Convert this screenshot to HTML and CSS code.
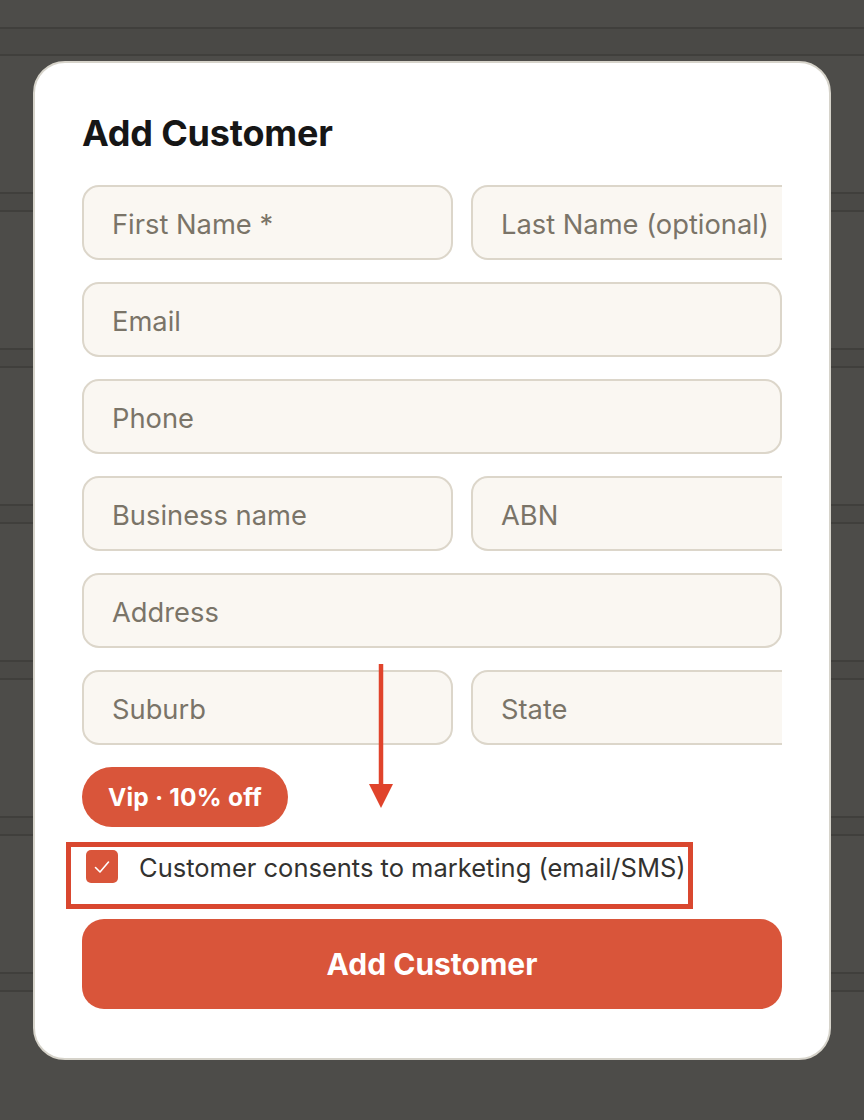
FILE: index.html
```html
<!DOCTYPE html>
<html lang="en">
<head>
<meta charset="utf-8">
<title>Add Customer</title>
<link rel="stylesheet" href="styles.css">
</head>
<body>
<div class="backdrop">
  <div class="bg-row bg-row-first"></div>
  <div class="bg-row"></div>
  <div class="bg-row"></div>
  <div class="bg-row"></div>
  <div class="bg-row"></div>
  <div class="bg-row"></div>
  <div class="bg-row"></div>
</div>

<div class="modal">
  <h1 class="title">Add Customer</h1>
  <form class="form">
    <div class="row split">
      <input class="field half" type="text" placeholder="First Name *">
      <input class="field half" type="text" placeholder="Last Name (optional)">
    </div>
    <div class="row">
      <input class="field" type="email" placeholder="Email">
    </div>
    <div class="row">
      <input class="field" type="tel" placeholder="Phone">
    </div>
    <div class="row split">
      <input class="field half" type="text" placeholder="Business name">
      <input class="field half" type="text" placeholder="ABN">
    </div>
    <div class="row">
      <input class="field" type="text" placeholder="Address">
    </div>
    <div class="row split">
      <input class="field half" type="text" placeholder="Suburb">
      <input class="field half" type="text" placeholder="State">
    </div>
    <div class="pill-wrap">
      <span class="pill">Vip · 10% off</span>
    </div>
    <label class="consent">
      <span class="check">
        <svg viewBox="0 0 32 32" width="32" height="32" aria-hidden="true">
          <path d="M9.5 16.5 L14 21 L22.5 11" fill="none" stroke="#fff" stroke-width="1.6" stroke-linecap="round" stroke-linejoin="round"/>
        </svg>
      </span>
      <span class="consent-text">Customer consents to marketing (email/SMS)</span>
    </label>
    <button class="submit" type="button">Add Customer</button>
  </form>
</div>

<svg class="arrow" width="30" height="150" viewBox="0 0 30 150" aria-hidden="true">
  <line x1="15" y1="1" x2="15" y2="124" stroke="#e0432b" stroke-width="4.5"/>
  <polygon points="3,121 27,121 15,145" fill="#e0432b"/>
</svg>
</body>
</html>
```

FILE: styles.css
```css
* {
  box-sizing: border-box;
}

html, body {
  margin: 0;
  padding: 0;
}

body {
  width: 864px;
  height: 1120px;
  background: #4d4c49;
  font-family: "Inter", "Liberation Sans", sans-serif;
  position: relative;
  overflow: hidden;
}

.backdrop {
  padding-top: 27px;
  display: flex;
  flex-direction: column;
  gap: 136px;
}

.bg-row {
  height: 20px;
  border-top: 2px solid #403f3c;
  border-bottom: 2px solid #403f3c;
  background: #4a4946;
}

.bg-row-first {
  height: 29px;
}

.modal {
  position: absolute;
  left: 33px;
  top: 61px;
  width: 798px;
  background: #ffffff;
  border: 2px solid #d6d3ca;
  border-radius: 32px;
  padding: 50px 47px 49px 47px;
}

.title {
  margin: 0 0 32px 0;
  font-size: 36px;
  line-height: 40px;
  font-weight: 700;
  color: #161616;
  letter-spacing: -0.2px;
}

.form {
  display: flex;
  flex-direction: column;
  width: 700px;
}

.row {
  display: flex;
  gap: 18px;
  margin-bottom: 22px;
  overflow: hidden;
}

.field {
  display: block;
  width: 100%;
  height: 75px;
  border: 2px solid #dcd6ca;
  border-radius: 17px;
  background: #faf7f2;
  padding: 3px 20px 0 28px;
  font-family: "Inter", "Liberation Sans", sans-serif;
  font-size: 27.3px;
  color: #333;
  outline: none;
}

.field::placeholder {
  color: #7a7468;
  opacity: 1;
}

.half {
  flex: 0 0 371px;
  width: 371px;
}

.row:last-of-type {
  margin-bottom: 0;
}

.pill-wrap {
  margin-top: 0;
  display: flex;
}

.pill {
  display: inline-flex;
  align-items: center;
  height: 60px;
  padding: 0 26px;
  border-radius: 30px;
  background: #d9553a;
  color: #ffffff;
  font-size: 24.5px;
  font-weight: 700;
  letter-spacing: 0.2px;
}

.consent {
  margin: 15px 0 0 -16px;
  align-self: flex-start;
  display: flex;
  align-items: center;
  gap: 21px;
  padding: 3px 2px 21px 15px;
  border: 5px solid #d9472f;
}

.check {
  width: 32px;
  height: 33px;
  border-radius: 5px;
  background: #d9553a;
  display: flex;
  align-items: center;
  justify-content: center;
}

.consent-text {
  font-size: 25.5px;
  line-height: 33px;
  color: #333230;
  position: relative;
  top: 1px;
}

.submit {
  margin-top: 10px;
  height: 90px;
  width: 700px;
  border: none;
  border-radius: 22px;
  background: #d9553a;
  color: #ffffff;
  font-family: "Inter", "Liberation Sans", sans-serif;
  font-size: 30px;
  font-weight: 700;
}

.arrow {
  position: absolute;
  left: 366px;
  top: 663px;
}
```
